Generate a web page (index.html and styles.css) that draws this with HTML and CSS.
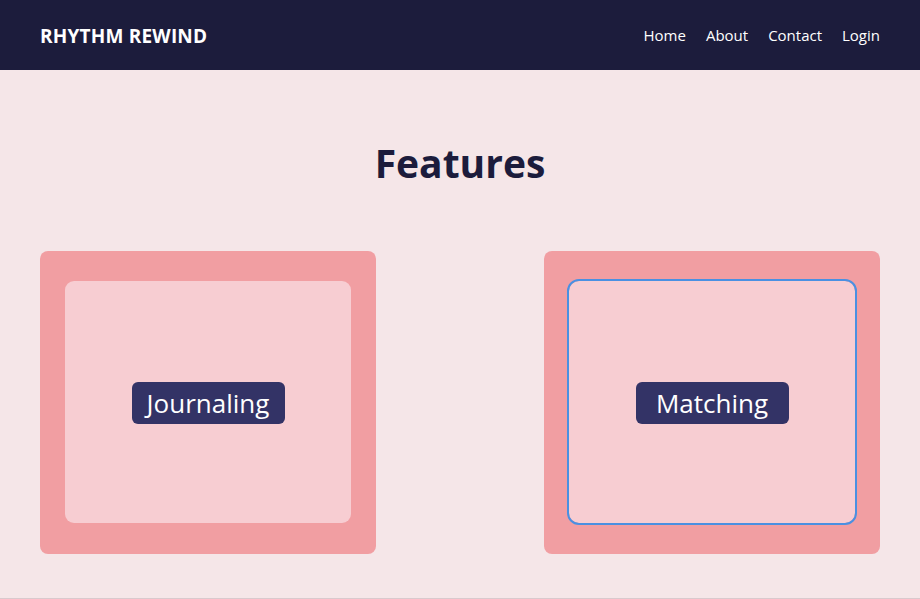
FILE: index.html
```html
<!DOCTYPE html>
<html lang="en">
<head>
<meta charset="utf-8">
<title>Rhythm Rewind</title>
<link rel="stylesheet" href="styles.css">
</head>
<body>
<header class="topbar">
  <div class="logo">RHYTHM REWIND</div>
  <nav class="nav">
    <a href="#">Home</a>
    <a href="#">About</a>
    <a href="#">Contact</a>
    <a href="#">Login</a>
  </nav>
</header>
<main class="features">
  <h1 class="title">Features</h1>
  <div class="cards">
    <div class="card">
      <div class="card-inner"><span class="label">Journaling</span></div>
    </div>
    <div class="card">
      <div class="card-inner focused"><span class="label">Matching</span></div>
    </div>
  </div>
</main>
<footer class="footer"></footer>
</body>
</html>
```
FILE: styles.css
```css
* { box-sizing: border-box; }
html, body { margin: 0; padding: 0; }
body {
  font-family: "Open Sans", "Noto Sans", sans-serif;
  background: #f5e6e8;
  height: 599px;
  overflow: hidden;
}
.topbar {
  height: 70px;
  background: #1c1c3c;
  display: flex;
  align-items: center;
  justify-content: space-between;
  padding: 0 40px;
}
.logo {
  color: #fff;
  font-weight: 700;
  font-size: 19px;
  letter-spacing: 0.2px;
  margin-top: 2px;
}
.nav {
  display: flex;
  gap: 20px;
}
.nav a {
  color: #fff;
  text-decoration: none;
  font-size: 15px;
  font-weight: 500;
}
.features {
  height: 528px;
  padding-top: 69px;
}
.title {
  margin: 0;
  text-align: center;
  font-size: 39px;
  line-height: 48px;
  font-weight: 700;
  color: #1c1c3c;
}
.cards {
  margin-top: 64px;
  padding: 0 40px;
  display: flex;
  justify-content: space-between;
}
.card {
  width: 336px;
  height: 303px;
  background: #f19ea2;
  border-radius: 8px;
  padding: 30px 25px 31px;
}
.card-inner {
  height: 242px;
  background: #f7cdd2;
  border-radius: 9px;
  display: flex;
  align-items: center;
  justify-content: center;
}
.card-inner.focused {
  outline: 2px solid #4a90e2;
  outline-offset: 0;
  border-radius: 10px;
}
.label {
  width: 153px;
  height: 42px;
  background: #333366;
  color: #fff;
  border-radius: 6px;
  font-size: 26px;
  font-weight: 500;
  display: flex;
  align-items: center;
  justify-content: center;
  margin-top: 1px;
}
.footer {
  border-top: 1px solid #d9c9cd;
  height: 1px;
}
```
